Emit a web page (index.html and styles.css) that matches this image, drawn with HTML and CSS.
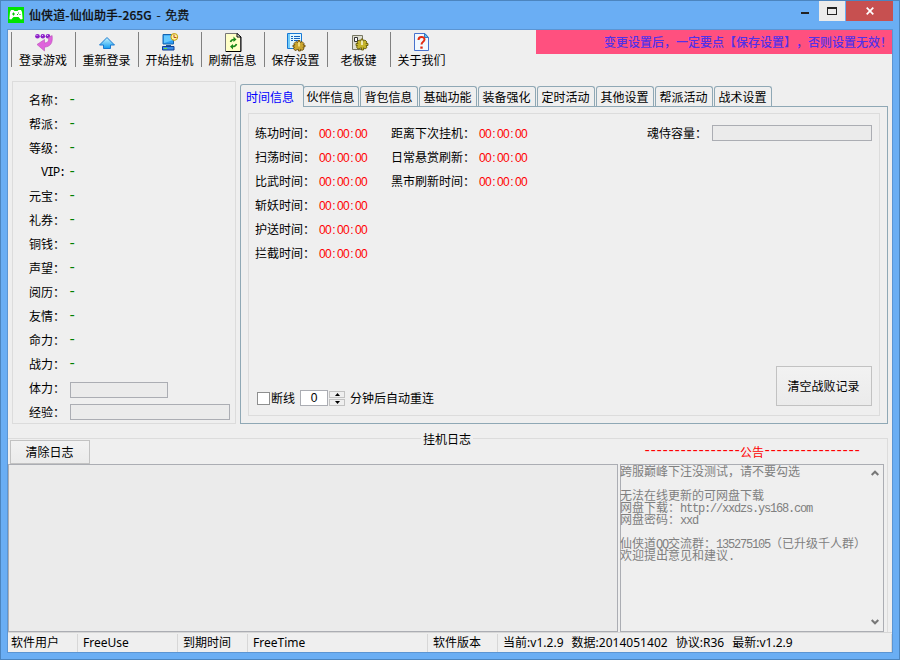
FILE: index.html
```html
<!DOCTYPE html>
<html lang="zh-CN">
<head>
<meta charset="utf-8">
<title>仙侠道-仙仙助手-265G - 免费</title>
<link rel="stylesheet" href="styles.css">
</head>
<body>
<div class="window">
  <header class="titlebar">
    <svg class="app-icon" width="16" height="16" viewBox="0 0 16 16"><rect width="16" height="16" fill="#00e400"/><path d="M3 3h2.500l1 1h3l1-1H13l1 2 .6 7-1.800.6L10.500 10h-5l-2.300 2.600-1.800-.6L2 5z" fill="#fff"/><path d="M4 7h3M5.500 5.500v3M10 6h1M9 7.500h1M11.500 7.500h1" stroke="#00c800"/></svg>
    <h1 class="title">仙侠道-仙仙助手-265G<span class="thin"> - 免费</span></h1>
    <div class="caption">
      <span class="cap min"><svg width="8" height="3"><rect width="8" height="2" fill="#222"/></svg></span>
      <span class="cap max"><svg width="10" height="8" shape-rendering="crispEdges"><path d="M0 0h10v8H0zM1 2v5h8V2z" fill="#222" fill-rule="evenodd"/></svg></span>
      <span class="cap close"><svg width="8" height="8"><path d="M.7.7l6.600 6.600M7.300.7L.7 7.300" stroke="#fff" stroke-width="1.700"/></svg></span>
    </div>
  </header>

  <main class="client">
    <div class="topline">
      <nav class="toolbar">
        <button class="tool"><svg width="20" height="20" viewBox="0 0 20 20"><g fill="#8c20c8"><circle cx="3.500" cy="3.300" r="2.300"/><circle cx="8.800" cy="3.300" r="2.300"/><circle cx="14" cy="3.300" r="2.300"/></g><path d="M2.500 2.500h1M8 2.500h1M13 2.500h1" stroke="#e2b4ff"/><path d="M14.500 4.500l3.600-2c1 8-1.800 11-7.600 11.700v3.800L3 11.500l7.500-5v3.500c3.500-.3 4.500-2 4-5.500z" fill="#df62dc" stroke="#b850b8" stroke-width=".6"/></svg><span>登录游戏</span></button>
        <button class="tool"><svg width="20" height="20" viewBox="0 0 20 20"><defs><linearGradient id="up" x2="0" y2="1"><stop stop-color="#c9f6ff"/><stop offset="1" stop-color="#129cf0"/></linearGradient></defs><path d="M10 4.500l7.500 7.500h-4v3.500h-7V12h-4z" fill="url(#up)" stroke="#1878d0"/></svg><span>重新登录</span></button>
        <button class="tool"><svg width="20" height="20" viewBox="0 0 20 20"><path d="M3 1.500h10.500V11H3z" fill="#2d9bf0" stroke="#1565b0"/><path d="M4 2.500h8v5L4 10z" fill="#65c8ff"/><path d="M6 12h5v1.500H6z" fill="#1d5b99"/><path d="M2.500 13.500h11.500v3.500H2.500z" fill="#3b8ce6" stroke="#113f94"/><path d="M4 15.500h3" stroke="#71e03a"/><circle cx="14.300" cy="3.900" r="3.400" fill="#fff49b" stroke="#c49b08"/><path d="M14 1.500v3h2.500" fill="none" stroke="#b34b24"/></svg><span>开始挂机</span></button>
        <button class="tool"><svg width="20" height="20" viewBox="0 0 20 20"><path d="M2.500.5h12l3 3.500v14.500h-15z" fill="#ffffc8" stroke="#777"/><path d="M18 4v14.500H3" fill="none" stroke="#000"/><path d="M14 .5V4h4z" fill="#fff" stroke="#000"/><path d="M7.500 9c.5-2 1.500-2.500 4-2.500M13.500 11c-.5 2-1.500 2.500-4 2.500" fill="none" stroke="#198719" stroke-width="1.600"/><path d="M10.500 3.500l3 3-3 2.500zM10 11l-3 2.500 3 3z" fill="#198719"/></svg><span>刷新信息</span></button>
        <button class="tool"><svg width="20" height="20" viewBox="0 0 20 20"><path d="M1.500.5h14v15h-14z" fill="#dff6ff" stroke="#1678d5"/><path d="M2 1h2v14H2z" fill="#74cdf8"/><path d="M5 3.500h2M8 3.500h6M5 5.500h2M8 5.500h6M5 7.500h2M8 7.500h4" stroke="#1261bd"/><path d="M12 7.500h2v2l2-1 2 2-1 1.500h2v2h-2l1 2-2 1.500-1.500-1.200v1.700h-2v-1.700L9 17.500l-1.500-2 1-1.500H7v-2h2l-1-1.500 2-2 2 1z" fill="#caa630" stroke="#604300" stroke-width=".8"/><path d="M12.300 9h1.400v4.500h-1.400z" fill="#fff4a2"/></svg><span>保存设置</span></button>
        <button class="tool"><svg width="20" height="20" viewBox="0 0 20 20"><path d="M3.500 2.500h10v14h-10z" fill="#deded2" stroke="#777764"/><path d="M5.500 4.500h3v4h-3z" fill="#fff" stroke="#333"/><path d="M12 6h2v2l2-1 2 2-1 1.500h2v2h-2l1 2-2 1.500-1.500-1.200V17h-2v-2.200L9 16l-1.500-2 1-1.500H7v-2h2L8 9l2-2 2 1z" fill="#c5b42c" stroke="#5b5200" stroke-width=".8"/><path d="M12.300 7.500h1.400V12h-1.400z" fill="#ffe"/></svg><span>老板键</span></button>
        <button class="tool"><svg width="20" height="20" viewBox="0 0 20 20"><path d="M2.500.5h10.500l3.500 4v13h-14z" fill="#f1f9ff" stroke="#4772ce"/><path d="M12.500.5V4.500h4z" fill="#65bdf0" stroke="#367bc5"/><path d="M6.500 7c0-4 6-4 6-.5 0 2.500-3 2-3 5" fill="none" stroke="#e22c12" stroke-width="2"/><path d="M8.300 13.500h2.400v2.200H8.300z" fill="#e22c12"/></svg><span>关于我们</span></button>
      </nav>
      <p class="banner">变更设置后，一定要点【保存设置】，否则设置无效！</p>
    </div>

    <div class="middle">
      <section class="profile">
        <div class="row"><span class="key">名称：</span><span class="dash">-</span></div>
        <div class="row"><span class="key">帮派：</span><span class="dash">-</span></div>
        <div class="row"><span class="key">等级：</span><span class="dash">-</span></div>
        <div class="row"><span class="key vip">VIP:</span><span class="dash">-</span></div>
        <div class="row"><span class="key">元宝：</span><span class="dash">-</span></div>
        <div class="row"><span class="key">礼券：</span><span class="dash">-</span></div>
        <div class="row"><span class="key">铜钱：</span><span class="dash">-</span></div>
        <div class="row"><span class="key">声望：</span><span class="dash">-</span></div>
        <div class="row"><span class="key">阅历：</span><span class="dash">-</span></div>
        <div class="row"><span class="key">友情：</span><span class="dash">-</span></div>
        <div class="row"><span class="key">命力：</span><span class="dash">-</span></div>
        <div class="row"><span class="key">战力：</span><span class="dash">-</span></div>
        <div class="row"><span class="key">体力：</span><span class="bar stamina"></span></div>
        <div class="row"><span class="key">经验：</span><span class="bar"></span></div>
      </section>

      <section class="tabs">
        <div class="tablist">
          <button class="tab active">时间信息</button>
          <button class="tab">伙伴信息</button>
          <button class="tab">背包信息</button>
          <button class="tab">基础功能</button>
          <button class="tab">装备强化</button>
          <button class="tab">定时活动</button>
          <button class="tab">其他设置</button>
          <button class="tab">帮派活动</button>
          <button class="tab">战术设置</button>
        </div>
        <div class="panel">
          <div class="group">
            <div class="times">
              <dl class="col first">
                <dt>练功时间：</dt><dd>00<i>:</i>00<i>:</i>00</dd>
                <dt>扫荡时间：</dt><dd>00<i>:</i>00<i>:</i>00</dd>
                <dt>比武时间：</dt><dd>00<i>:</i>00<i>:</i>00</dd>
                <dt>斩妖时间：</dt><dd>00<i>:</i>00<i>:</i>00</dd>
                <dt>护送时间：</dt><dd>00<i>:</i>00<i>:</i>00</dd>
                <dt>拦截时间：</dt><dd>00<i>:</i>00<i>:</i>00</dd>
              </dl>
              <dl class="col second">
                <dt>距离下次挂机：</dt><dd>00<i>:</i>00<i>:</i>00</dd>
                <dt>日常悬赏刷新：</dt><dd>00<i>:</i>00<i>:</i>00</dd>
                <dt>黑市刷新时间：</dt><dd>00<i>:</i>00<i>:</i>00</dd>
              </dl>
              <div class="capacity"><span>魂侍容量：</span><span class="bar"></span></div>
            </div>
            <div class="actions">
              <div class="reconnect">
                <span class="check"></span><span class="offline">断线</span>
                <span class="number">0</span>
                <span class="spin">
                  <span><svg width="5" height="3"><path d="M2.500 0L5 3H0z"/></svg></span>
                  <span><svg width="5" height="3"><path d="M0 0h5L2.500 3z"/></svg></span>
                </span>
                <span class="after">分钟后自动重连</span>
              </div>
              <button class="btn clear-record">清空战败记录</button>
            </div>
          </div>
        </div>
      </section>
    </div>

    <section class="logs">
      <div class="legend"><span>挂机日志</span></div>
      <div class="loghead">
        <button class="btn clear-log">清除日志</button>
        <p class="notice-title"><span class="rule">----------------</span>公告<span class="rule">----------------</span></p>
      </div>
      <div class="memos">
        <div class="memo log"></div>
        <div class="memo notice">
          <div class="text">
            <p>跨服巅峰下注没测试，请不要勾选</p>
            <p></p>
            <p>无法在线更新的可网盘下载</p>
            <p>网盘下载：<span class="mono">http://xxdzs.ys168.com</span></p>
            <p>网盘密码：<span class="mono">xxd</span></p>
            <p></p>
            <p>仙侠道<span class="mono">QQ</span>交流群：<span class="mono">135275105</span>（已升级千人群）</p>
            <p>欢迎提出意见和建议<span class="mono">.</span></p>
          </div>
          <div class="scroll">
            <svg width="8" height="6"><path d="M.7 5L4 1.700 7.300 5"/></svg>
            <svg width="8" height="6"><path d="M.7 1L4 4.300 7.300 1"/></svg>
          </div>
        </div>
      </div>
    </section>

    <footer class="status">
      <span class="s1">软件用户</span>
      <span class="s2">FreeUse</span>
      <span class="s3">到期时间</span>
      <span class="s4">FreeTime</span>
      <span class="s5">软件版本</span>
      <span class="s6"><b>当前:v1.2.9</b><b>数据:2014051402</b><b>协议:R36</b><b>最新:v1.2.9</b></span>
    </footer>
  </main>
</div>
</body>
</html>
```
FILE: styles.css
```css
* { box-sizing: border-box; margin: 0; padding: 0; }

body {
  width: 900px;
  height: 660px;
  overflow: hidden;
  font: 12px/16px "Noto Sans CJK SC", sans-serif;
  text-spacing-trim: space-all;
  white-space: nowrap;
  color: #000;
}

button { font: inherit; color: inherit; background: none; border: 0; white-space: nowrap; }
svg { display: block; flex: none; }
i, b { font-style: normal; font-weight: inherit; }

.window {
  width: 900px;
  height: 660px;
  padding: 0 6px 6px;
  border: 1px solid #4c85bf;
  background: #6aaef4;
}

.titlebar { display: flex; height: 28px; }
.app-icon { margin: 6px 5px 0 1px; }
.title { font-size: 12px; font-weight: 500; line-height: 16px; padding-top: 6px; color: #111; letter-spacing: 0.1px; -webkit-text-stroke: 0.2px #111; }
.title .thin { font-weight: 400; white-space: pre; word-spacing: 1.8px; }
.caption { display: flex; height: 20px; margin-left: auto; }
.cap { display: flex; align-items: center; justify-content: center; }
.min { width: 28px; padding-top: 5px; }
.max { width: 26px; margin-right: 1px; background: #ebebeb; }
.close { width: 47px; background: #c75050; }

.client {
  display: flex;
  flex-direction: column;
  height: 624px;
  border: 1px solid #5b95d3;
  background: #efefef;
}
.client > * { flex: none; }

.topline { display: flex; height: 51px; justify-content: space-between; }
.toolbar { display: flex; height: 35px; margin: 2px 0 0 3px; }
.tool {
  display: flex;
  flex-direction: column;
  align-items: center;
  width: 63px;
  border-left: 1px solid #808080;
}
.tool:first-child { width: 64px; }
.tool svg { margin-top: 1px; }
.tool span { line-height: 16px; margin: -1px 1px 0 0; }

.banner {
  width: 356px;
  height: 24px;
  background: #ff507f;
  color: #5230e8;
  font-weight: 500;
  line-height: 24px;
  text-align: right;
}

.middle { display: flex; height: 343px; padding-left: 4px; gap: 4px; }

.profile { width: 224px; border: 1px solid #dcdcdc; padding-top: 6px; }
.row { display: flex; align-items: center; height: 24px; }
.key { width: 52px; margin-right: 5px; text-align: right; }
.vip { font: 12px "Liberation Mono", monospace; letter-spacing: -1.2px; padding-top: 1px; }
.dash { color: #008000; font: 14px/14px "Liberation Mono", monospace; margin-top: -1px; margin-left: -2px; }
.bar { width: 160px; height: 16px; border: 1px solid #abadb3; background: #ebebeb; }
.stamina { width: 98px; margin-top: 4px; }

.tabs { display: flex; flex-direction: column; width: 648px; padding-top: 3px; }
.tablist { display: flex; align-items: flex-end; height: 22px; }
.tab {
  width: 58px;
  height: 20px;
  margin-right: 1px;
  padding-right: 1px;
  border: 1px solid #8fa8b5;
  border-bottom: 0;
  border-radius: 3px 3px 0 0;
  line-height: 20px;
}
.tab:nth-child(2) { width: 56px; }
.tab.active {
  position: relative;
  width: 64px;
  height: 23px;
  margin: 0 -1px -1px 0;
  background: #efefef;
  color: #00f;
  line-height: 21px;
  padding-right: 4px;
}
.panel { flex: 1; border: 1px solid #8fa8b5; padding: 6px 7px 7px; }
.group { display: flex; flex-direction: column; justify-content: space-between; height: 303px; border: 1px solid #dcdcdc; }
.times { display: flex; padding: 7px 7px 0 6px; }
.col { display: grid; grid-auto-rows: 24px; align-content: start; line-height: 24px; }
.first { grid-template-columns: 64px 72px; }
.second { grid-template-columns: 88px 56px; }
.col dd { color: #f00; font: 12px/24px "Liberation Sans", sans-serif; letter-spacing: -0.67px; padding-top: 1px; }
.col i { display: inline-block; width: 6px; text-align: center; letter-spacing: 0; }
.capacity { display: flex; align-items: center; height: 24px; margin-left: auto; gap: 5px; }

.actions { display: flex; justify-content: space-between; align-items: flex-end; padding: 0 7px 9px 8px; }
.btn { border: 1px solid #c2c2c2; background: linear-gradient(#f2f2f2, #ebebeb); padding-right: 1px; }
.clear-record { width: 96px; height: 40px; }
.reconnect { display: flex; align-items: center; height: 16px; }
.check { width: 13px; height: 13px; border: 1px solid #8e8f8f; background: #fff; }
.offline { margin: 0 5px 0 1px; }
.number { width: 28px; height: 16px; border: 1px solid #abadb3; background: #fff; text-align: center; font: 12px/15px "Liberation Sans", sans-serif; }
.spin { display: flex; flex-direction: column; gap: 1px; margin-left: 1px; }
.spin span { display: flex; align-items: center; justify-content: center; width: 16px; height: 7px; border: 1px solid #c2c2c2; }
.after { margin-left: 5px; }

.logs { width: 880px; height: 194px; margin-top: 14px; border-right: 1px solid #dcdcdc; display: flex; flex-direction: column; }
.legend { display: flex; align-items: center; height: 1px; }
.legend::before, .legend::after { content: ""; flex: 1; height: 1px; background: #dcdcdc; }
.legend span { padding: 0 2px; line-height: 16px; margin: -8px 0; }
.legend::before { flex: 0 0 413px; }
.loghead { display: flex; height: 25px; padding-top: 1px; justify-content: space-between; }
.clear-log { width: 80px; height: 24px; margin-left: 2px; }
.notice-title { display: flex; width: 216px; margin-right: 27px; padding-top: 4px; color: #f00; }
.rule { width: 96px; font: 14px/15px "Liberation Mono", monospace; letter-spacing: -2.4px; margin-left: -1px; margin-right: 1px; }
.memos { display: flex; gap: 2px; flex: 1; }
.memo { border: 1px solid #abadb3; height: 168px; }
.log { width: 610px; background: #ebebeb; }
.notice { display: flex; justify-content: space-between; width: 264px; color: #808080; }
.text { margin-left: -1px; }
.text p { height: 12px; line-height: 12px; }
.mono { font: 12px/12px "Liberation Mono", monospace; letter-spacing: -1.2px; }
.scroll { display: flex; flex-direction: column; justify-content: space-between; padding: 5px 4px 6px 0; margin-left: -20px; }
.scroll path { fill: none; stroke: #777; stroke-width: 2; }

.status { display: flex; height: 20px; border-top: 1px solid #d7d7d7; font-family: "Noto Sans", "Noto Sans CJK SC", sans-serif; }
.status > span { border-right: 1px solid #d7d7d7; margin-top: 1px; height: 18px; padding-left: 5px; line-height: 18px; }
.status .s1 { width: 70px; padding-left: 3px; }
.s2 { width: 100px; }
.s3 { width: 70px; }
.s4 { width: 180px; }
.s5 { width: 70px; }
.s6 { display: flex; flex: 1; gap: 8px; letter-spacing: 0.02px; }
```
